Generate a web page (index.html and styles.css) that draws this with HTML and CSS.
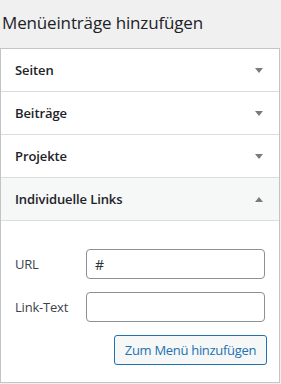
FILE: index.html
```html
<!DOCTYPE html>
<html lang="de">
<head>
    <meta charset="UTF-8">
    <meta name="viewport" content="width=device-width, initial-scale=1.0">
    <title>Menüeinträge hinzufügen</title>
    <link rel="stylesheet" href="styles.css">
</head>
<body>
    <h2 class="title">Menüeinträge hinzufügen</h2>
    <div class="accordion">
        <div class="section">
            <h3 class="section-title">Seiten <span class="arrow down"></span></h3>
        </div>
        <div class="section">
            <h3 class="section-title">Beiträge <span class="arrow down"></span></h3>
        </div>
        <div class="section">
            <h3 class="section-title">Projekte <span class="arrow down"></span></h3>
        </div>
        <div class="section open">
            <h3 class="section-title">Individuelle Links <span class="arrow up"></span></h3>
            <div class="section-content">
                <div class="field">
                    <label for="customUrl">URL</label>
                    <input type="text" id="customUrl" value="#">
                </div>
                <div class="field">
                    <label for="customLinkText">Link-Text</label>
                    <input type="text" id="customLinkText">
                </div>
                <div class="actions">
                    <button type="button">Zum Menü hinzufügen</button>
                </div>
            </div>
        </div>
    </div>
</body>
</html>
```

FILE: styles.css
```css
body {
    font-family: "Open Sans", "Noto Sans", sans-serif;
    margin: 0;
    padding: 0;
    background-color: #f0f0f1;
    color: #1d2327;
}
.title {
    margin: 0;
    height: 48px;
    padding-left: 2px;
    font-size: 17px;
    font-weight: 400;
    line-height: 46px;
    letter-spacing: -0.15px;
}
.accordion {
    width: 278px;
    background: white;
    border: 1px solid #c3c4c7;
}
.section {
    border-bottom: 1px solid #dcdcde;
}
.section:last-child {
    border-bottom: none;
}
.section-title {
    margin: 0;
    height: 42px;
    padding: 0 15px 0 14px;
    display: flex;
    align-items: center;
    justify-content: space-between;
    font-size: 13px;
    font-weight: 600;
    letter-spacing: -0.1px;
}
.open .section-title {
    background-color: #f6f7f7;
    border-bottom: 1px solid #dcdcde;
}
.arrow {
    width: 0;
    height: 0;
    margin-right: 1px;
    border-left: 4px solid transparent;
    border-right: 4px solid transparent;
}
.arrow.down {
    border-top: 5px solid #787c82;
}
.arrow.up {
    border-bottom: 5px solid #787c82;
}
.section-content {
    height: 161px;
    padding: 28px 12px 0 14px;
    box-sizing: border-box;
}
.field {
    display: flex;
    align-items: center;
    margin-bottom: 13px;
}
label {
    width: 71px;
    flex-shrink: 0;
    font-size: 13px;
    color: #3c434a;
    letter-spacing: -0.2px;
}
input {
    width: 179px;
    height: 30px;
    margin: 0;
    box-sizing: border-box;
    padding: 0 8px;
    font-family: inherit;
    font-size: 14px;
    color: #2c3338;
    border: 1px solid #8c8f94;
    border-radius: 4px;
}
.actions {
    display: flex;
    justify-content: flex-end;
}
button {
    width: 153px;
    height: 30px;
    margin: 0;
    padding: 0;
    font-family: inherit;
    font-size: 13px;
    color: #2271b1;
    background-color: #f6f7f7;
    border: 1px solid #2271b1;
    border-radius: 3px;
    letter-spacing: -0.3px;
    cursor: pointer;
}
```
